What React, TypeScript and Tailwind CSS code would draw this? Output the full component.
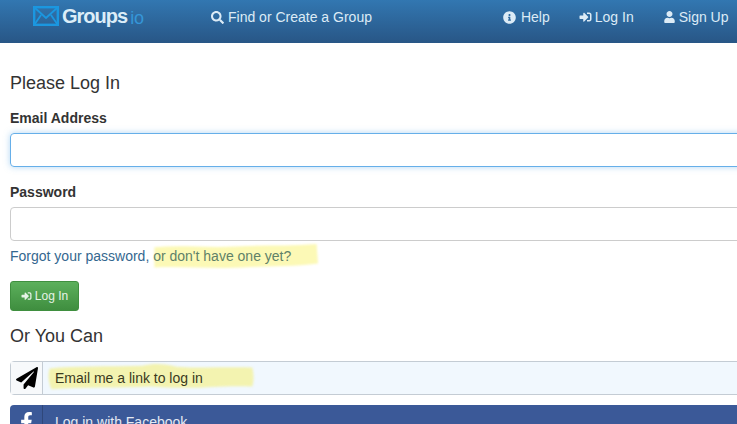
import { FaSearch, FaInfoCircle, FaSignInAlt, FaUser, FaPaperPlane, FaFacebookF } from "react-icons/fa";

function Highlight({ d, className, fill }: { d: string; className: string; fill: string }) {
  return (
    <svg className={className} viewBox="0 0 240 32" preserveAspectRatio="none" aria-hidden="true">
      <path d={d} fill={fill} />
    </svg>
  );
}

export default function App() {
  return (
    <div className="w-[737px] h-[424px] overflow-hidden bg-white font-['Liberation_Sans',Arial,sans-serif] text-[14px] text-[#333]">
      <nav className="h-[43px] flex items-center bg-gradient-to-b from-[#3277b1] to-[#285686] text-[#dcebf6]">
        <div className="flex items-center ml-[33px] w-[178px] pb-[11px]">
          <svg width="26" height="20" viewBox="0 0 26 20" fill="none" stroke="#1b97e0" strokeWidth="2.4" aria-hidden="true">
            <rect x="1.2" y="1.2" width="23.6" height="17.6" />
            <path d="M1.5 1.5 L13 12 L24.5 1.5 M1.5 18.5 L8 9 M24.5 18.5 L18 9" strokeWidth="1.8" />
          </svg>
          <span className="ml-[3px] text-[20px] font-bold tracking-[-1px] text-[#dcedf8] leading-none">Groups</span>
          <span className="ml-[3px] text-[18px] font-light text-[#3596d8] leading-none mt-[3px]">io</span>
        </div>
        <a className="flex items-center gap-[4px] pb-[9px]">
          <FaSearch className="w-[13px] h-[13px]" />
          <span>Find or Create a Group</span>
        </a>
        <a className="flex items-center gap-[5px] pb-[9px] ml-[131px]">
          <FaInfoCircle className="w-[13px] h-[13px]" />
          <span>Help</span>
        </a>
        <a className="flex items-center gap-[3px] pb-[9px] ml-[29px]">
          <FaSignInAlt className="w-[13px] h-[12px]" />
          <span>Log In</span>
        </a>
        <a className="flex items-center gap-[4px] pb-[9px] ml-[30px]">
          <FaUser className="w-[11px] h-[12px]" />
          <span>Sign Up</span>
        </a>
      </nav>

      <main className="w-[770px] pl-[10px] flex flex-col items-start">
        <h1 className="mt-[30px] text-[18px] leading-[20px] text-[#333]">Please Log In</h1>

        <label className="mt-[15px] font-bold leading-[20px]">Email Address</label>
        <input className="mt-[5px] w-full h-[34px] rounded-[4px] border border-[#66afe9] shadow-[0_0_6px_rgba(102,175,233,0.5)] outline-none" />

        <label className="mt-[15px] font-bold leading-[20px]">Password</label>
        <input className="mt-[5px] w-full h-[34px] rounded-[4px] border border-[#ccc] outline-none" />

        <p className="mt-[5px] leading-[20px] relative">
          <Highlight
            fill="#fcf9b6"
            className="absolute left-[143px] top-[-2px] w-[165px] h-[26px] blur-[1px]"
            d="M2 4 C40 1 80 5 120 3 C160 1 200 3 238 0 L240 24 C200 28 170 27 130 29 C90 31 40 27 2 29 Z"
          />
          <span className="relative text-[#34678f]">Forgot your password, </span>
          <span className="relative text-[#5f8168]">or don't have one yet?</span>
        </p>

        <button className="mt-[15px] h-[30px] w-[69px] flex items-center justify-center gap-[3px] rounded-[3px] border border-[#3f8f3f] bg-gradient-to-b from-[#5cb05c] to-[#3f8e3f] text-[12px] text-[#e6f3e6]">
          <FaSignInAlt className="w-[11px] h-[10px]" />
          <span>Log In</span>
        </button>

        <h2 className="mt-[15px] text-[18px] leading-[20px]">Or You Can</h2>

        <div className="mt-[15px] w-full h-[34px] flex items-stretch rounded-[4px] border border-[#c4ccd4] bg-[#f1f8fe]">
          <div className="w-[32px] flex items-center justify-center border-r border-[#c4ccd4] bg-[#f7f9fb] shrink-0">
            <FaPaperPlane className="w-[22px] h-[22px] text-black" />
          </div>
          <div className="relative flex items-center pl-[12px]">
            <Highlight
              fill="#f3f3b0"
              className="absolute left-[5px] top-[1px] w-[206px] h-[29px] blur-[1px]"
              d="M2 6 C30 3 70 4 110 3 C125 0 135 1 150 4 C180 6 210 4 238 5 C240 12 240 20 238 26 C200 24 170 30 120 26 C80 28 40 26 4 29 C0 20 0 12 2 6 Z"
            />
            <span className="relative text-[#3a3a1e]">Email me a link to log in</span>
          </div>
        </div>

        <div className="mt-[10px] w-full h-[34px] flex items-stretch rounded-[4px] bg-[#3b5998] text-white shrink-0">
          <div className="w-[33px] flex items-center justify-center border-r border-[#2f477a] shrink-0">
            <FaFacebookF className="w-[13px] h-[20px]" />
          </div>
          <div className="flex items-center pl-[12px] text-[#e4e9f3]">Log in with Facebook</div>
        </div>
      </main>
    </div>
  );
}
